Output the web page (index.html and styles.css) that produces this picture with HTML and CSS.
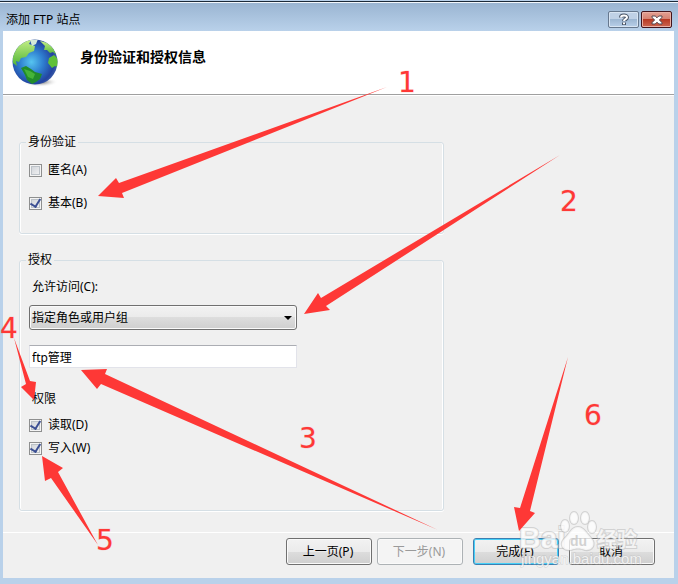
FILE: index.html
```html
<!DOCTYPE html>
<html lang="zh-CN">
<head>
  <meta charset="UTF-8" />
  <title>添加 FTP 站点</title>
  <link rel="stylesheet" href="styles.css">
</head>
<body>

<div class="window">
  <div class="titlebar">
    <span class="title">添加 FTP 站点</span>
    <div class="caption-buttons">
      <button class="caption help" aria-label="帮助">
        <svg width="12" height="13" viewBox="0 0 12 13" fill="none">
          <path d="M3 4.5C3 1.8 9 1.6 9 4.5C9 6.2 6 6.2 6 8.2M6 9.5V12" stroke="#4a5566" stroke-width="4"/>
          <path d="M3 4.5C3 1.8 9 1.6 9 4.5C9 6.2 6 6.2 6 8M6 9.5V11.2" stroke="#fff" stroke-width="2"/>
        </svg>
      </button>
      <button class="caption close" aria-label="关闭">
        <svg width="12" height="10" viewBox="0 0 12 10">
          <path d="M1 1H4.2L6 2.8L7.8 1H11V2.5L8.3 5L11 7.5V9H7.8L6 7.2L4.2 9H1V7.5L3.7 5L1 2.5Z" fill="#fff" stroke="#54474e"/>
        </svg>
      </button>
    </div>
  </div>

  <div class="header">
    <svg class="globe" width="50" height="50" viewBox="0 0 50 50">
      <defs>
        <radialGradient id="ocean" cx="42%" cy="50%" r="58%">
          <stop offset="0" stop-color="#56c4f0"/>
          <stop offset="0.45" stop-color="#2f7fd0"/>
          <stop offset="0.85" stop-color="#2343a0"/>
          <stop offset="1" stop-color="#3c5fa8"/>
        </radialGradient>
        <linearGradient id="land" x1="0" y1="0" x2="0" y2="1">
          <stop offset="0" stop-color="#c4ee86"/>
          <stop offset="1" stop-color="#4fb435"/>
        </linearGradient>
        <radialGradient id="shade">
          <stop offset="0" stop-color="#555"/>
          <stop offset="1" stop-color="#fff" stop-opacity="0"/>
        </radialGradient>
        <clipPath id="ball"><circle cx="24" cy="24" r="22.5"/></clipPath>
      </defs>
      <ellipse cx="29" cy="44" rx="18" ry="5" fill="url(#shade)"/>
      <circle cx="24" cy="24" r="22.5" fill="url(#ocean)"/>
      <g clip-path="url(#ball)">
        <path d="M2 25L1 15L7 6L14 2L20 2L18 6L24 8L23 13L18 15L15 19L10 20L8 24L5 23L6 28Z" fill="url(#land)"/>
        <path d="M19 2L27 1L25 6L21 8Z" fill="#d5e9d8"/>
        <path d="M29 3L37 5L42 10L46 17L42 14L39 15L36 12L33 12L34 8Z" fill="url(#land)"/>
        <path d="M38 20L43 17L47 21V29L44 28L41 30L37 25Z" fill="#5fc038"/>
        <path d="M10 30L15 28L20 31L24 34L31 36L29 41L25 44L21 46L16 42L14 37Z" fill="#218c2b"/>
        <path d="M13 31L19 33L24 36L22 41L17 39Z" fill="#45b438"/>
      </g>
    </svg>
    <h1>身份验证和授权信息</h1>
  </div>

  <div class="content">
    <fieldset class="auth">
      <legend>身份验证</legend>
      <label class="check"><input type="checkbox"> 匿名(A)</label>
      <label class="check"><input type="checkbox" checked> 基本(B)</label>
    </fieldset>

    <fieldset class="grant">
      <legend>授权</legend>
      <label class="caption-text" for="access">允许访问(C):</label>
      <div class="select">
        <select id="access">
          <option>所有用户</option>
          <option selected>指定角色或用户组</option>
        </select>
      </div>
      <input class="text" type="text" value="ftp管理" aria-label="角色或用户组">
      <div class="caption-text">权限</div>
      <div class="rights">
        <label class="check"><input type="checkbox" checked> 读取(D)</label>
        <label class="check"><input type="checkbox" checked> 写入(W)</label>
      </div>
    </fieldset>
  </div>

  <div class="footer">
    <div class="nav">
      <button class="btn">上一页(P)</button>
      <button class="btn" disabled>下一步(N)</button>
    </div>
    <button class="btn primary">完成(F)</button>
    <button class="btn">取消</button>
  </div>
</div>

<!-- numbered steps drawn over the dialog -->
<svg class="notes" width="678" height="584" viewBox="0 0 678 584">
  <g class="watermark">
    <text class="wm-logo" x="519" y="548">Bai</text>
    <ellipse cx="565" cy="526" rx="4" ry="6"/>
    <ellipse cx="574" cy="518" rx="4" ry="6"/>
    <ellipse cx="585" cy="518" rx="4" ry="6"/>
    <ellipse cx="592" cy="527" rx="4" ry="6"/>
    <path d="M578 527C584 527 587 534 592 539C596 545 592 551 585 550C580 548 576 548 571 550C563 551 559 545 564 539C570 534 571 527 578 527Z"/>
    <text class="wm-du" x="570" y="546">du</text>
    <text class="wm-cn" x="597" y="547">经验</text>
    <text class="wm-url" x="521" y="564">jingyan.baidu.com</text>
  </g>
  <g class="arrows">
    <path d="M98 196L116 178L119 183L387 87L122 193L124 198Z"/>
    <path d="M304 314L318 293L321 298L560 155L326 306L330 310Z"/>
    <path d="M81 370L107 369L105 374L438 530L101 384L97 389Z"/>
    <path d="M34 400L21 387L26 384L14 338L30 381L36 382Z"/>
    <path d="M42 456L63 468L58 472L98 545L51 478L45 481Z"/>
    <path d="M519 531L514 507L520 508L568 357L530 511L535 513Z"/>
  </g>
  <g class="numbers">
    <text x="398" y="92">1</text>
    <text x="560" y="211">2</text>
    <text x="299" y="448">3</text>
    <text x="0" y="338">4</text>
    <text x="96" y="550">5</text>
    <text x="584" y="425">6</text>
  </g>
</svg>

</body>
</html>
```
FILE: styles.css
```css
* {
  box-sizing: border-box;
}
body {
  margin: 0;
  position: relative;
  font-family: "Noto Sans", "Noto Sans CJK SC", sans-serif;
  font-size: 12px;
  line-height: 20px;
  color: #000;
}
button, input, select {
  font: inherit;
  color: inherit;
  margin: 0;
}

/* Window frame */
.window {
  min-height: 100vh;
  display: flex;
  flex-direction: column;
  padding: 1px 4px 6px 3px;
  background: #b9d1ea;
}
.titlebar {
  display: flex;
  justify-content: space-between;
  align-items: center;
  height: 30px;
  margin: 0 -4px 0 -3px;
  padding: 6px 6px 0;
  border-top: 1px solid #1c2a38;
  box-shadow: inset 0 1px #f2f7fc;
  background: linear-gradient(#99b4d1, #b9d1ea);
}
.caption-buttons {
  display: flex;
  gap: 2px;
}
.caption {
  display: flex;
  align-items: center;
  justify-content: center;
  width: 31px;
  height: 17px;
  padding: 0;
  border: 1px solid #66788e;
  border-radius: 2px;
  box-shadow: inset 0 0 0 1px #d8e5f3;
  background: linear-gradient(#bfd1e6 50%, #9db7d3 50%, #b9d0e9);
}
.caption.close {
  border-color: #43141b;
  box-shadow: inset 0 0 0 1px #e9b0a5;
  background: linear-gradient(#e3a093, #d6806f 50%, #b83a24 50%, #cc6650);
}

/* Page heading */
.header {
  display: flex;
  align-items: flex-start;
  gap: 19px;
  height: 65px;
  padding: 7px 8px 0;
  background: #fff;
  border-bottom: 1px solid #fff;
  box-shadow: inset 0 -1px #a0a0a0;
}
.header h1 {
  margin: 9px 0 0;
  font-size: 14px;
  line-height: 20px;
  font-weight: 700;
}

/* Form */
.content {
  flex: 1;
  padding: 36px 16px 20px;
  background: #f0f0f0;
}
fieldset {
  max-width: 425px;
  min-width: 0;
  margin: 0;
  border: 1px solid #d5dfe5;
  border-radius: 3px;
  box-shadow: inset 1px 0 #fff, inset -1px 0 #fff, 0 1px #fff;
}
legend {
  margin-left: -3px;
  padding: 0 2px;
}
.auth {
  padding: 8px 9px 20px;
}
.auth .check + .check {
  margin-top: 13px;
}
.grant {
  margin-top: 16px;
  padding: 7px 9px 52px;
}
.check {
  display: flex;
  align-items: center;
  gap: 6px;
}
.check input {
  appearance: none;
  display: grid;
  place-items: center;
  width: 13px;
  height: 13px;
  border: 1px solid #8e8f8f;
  box-shadow: inset 0 0 0 1px #f4f4f4, inset 0 0 0 2px #bcc2c8;
  background: linear-gradient(135deg, #cbcfd5, #f6f6f6);
}
.check input:checked::after {
  content: "";
  width: 5px;
  height: 8px;
  margin-top: -2px;
  border: solid #3b4f93;
  border-width: 0 2px 2px 0;
  transform: rotate(32deg);
}
.caption-text {
  display: block;
  padding-left: 3px;
}
.select {
  position: relative;
  max-width: 268px;
  margin-top: 8px;
}
.select::after {
  content: "";
  position: absolute;
  right: 5px;
  top: 11px;
  border: 4px solid transparent;
  border-top-color: #000;
  border-bottom: 0;
}
select {
  appearance: none;
  display: block;
  width: 100%;
  height: 25px;
  padding: 0 2px;
  border: 1px solid #707070;
  border-radius: 3px;
  box-shadow: inset 0 0 0 1px #fafafa;
  background: linear-gradient(#f2f2f2, #ebebeb 50%, #dddddd 50%, #cfcfcf);
}
.text {
  display: block;
  width: 100%;
  max-width: 268px;
  height: 23px;
  margin: 15px 0 21px;
  padding: 0 2px;
  border: 1px solid #e2e3ea;
  border-top-color: #abadb3;
  background: #fff;
}
.rights {
  display: grid;
  gap: 3px;
  margin-top: 6px;
}

/* Bottom buttons */
.footer {
  display: flex;
  justify-content: flex-end;
  gap: 10px;
  padding: 5px 19px 13px;
  border-top: 1px solid #fff;
  background: #f0f0f0;
}
.nav {
  display: flex;
  gap: 5px;
}
.btn {
  width: 86px;
  height: 27px;
  padding: 0 2px 0 0;
  border: 1px solid #707070;
  border-radius: 3px;
  box-shadow: inset 0 0 0 1px #fafafa;
  background: linear-gradient(#f2f2f2, #ebebeb 50%, #dddddd 50%, #cfcfcf);
}
.btn.primary {
  border-color: #3c7fb1;
  box-shadow: inset 0 0 0 1px #46d0f8;
}
.btn:disabled {
  color: #9a9a9a;
  border-color: #adb2b5;
  background: #f4f4f4;
}

/* Step marks */
.notes {
  position: absolute;
  top: 0;
  left: 0;
  pointer-events: none;
}
.arrows, .numbers {
  fill: #fe3836;
}
.numbers {
  font-family: "DejaVu Sans", sans-serif;
  font-size: 28px;
  stroke: #fe3836;
  stroke-opacity: 0.2;
}
.watermark {
  fill: #fff;
  fill-opacity: 0.75;
  stroke: #b4b4b4;
  stroke-opacity: 0.5;
  stroke-width: 2px;
  paint-order: stroke;
}
.wm-logo {
  font: 700 30px "Liberation Sans", sans-serif;
}
.wm-du {
  font: 700 14px "Liberation Sans", sans-serif;
  fill: #c4c4c4;
  stroke: none;
}
.wm-cn {
  font: 700 20px "Noto Sans CJK SC", sans-serif;
}
.wm-url {
  font: 15px "Liberation Sans", sans-serif;
  stroke-width: 1px;
}
```
